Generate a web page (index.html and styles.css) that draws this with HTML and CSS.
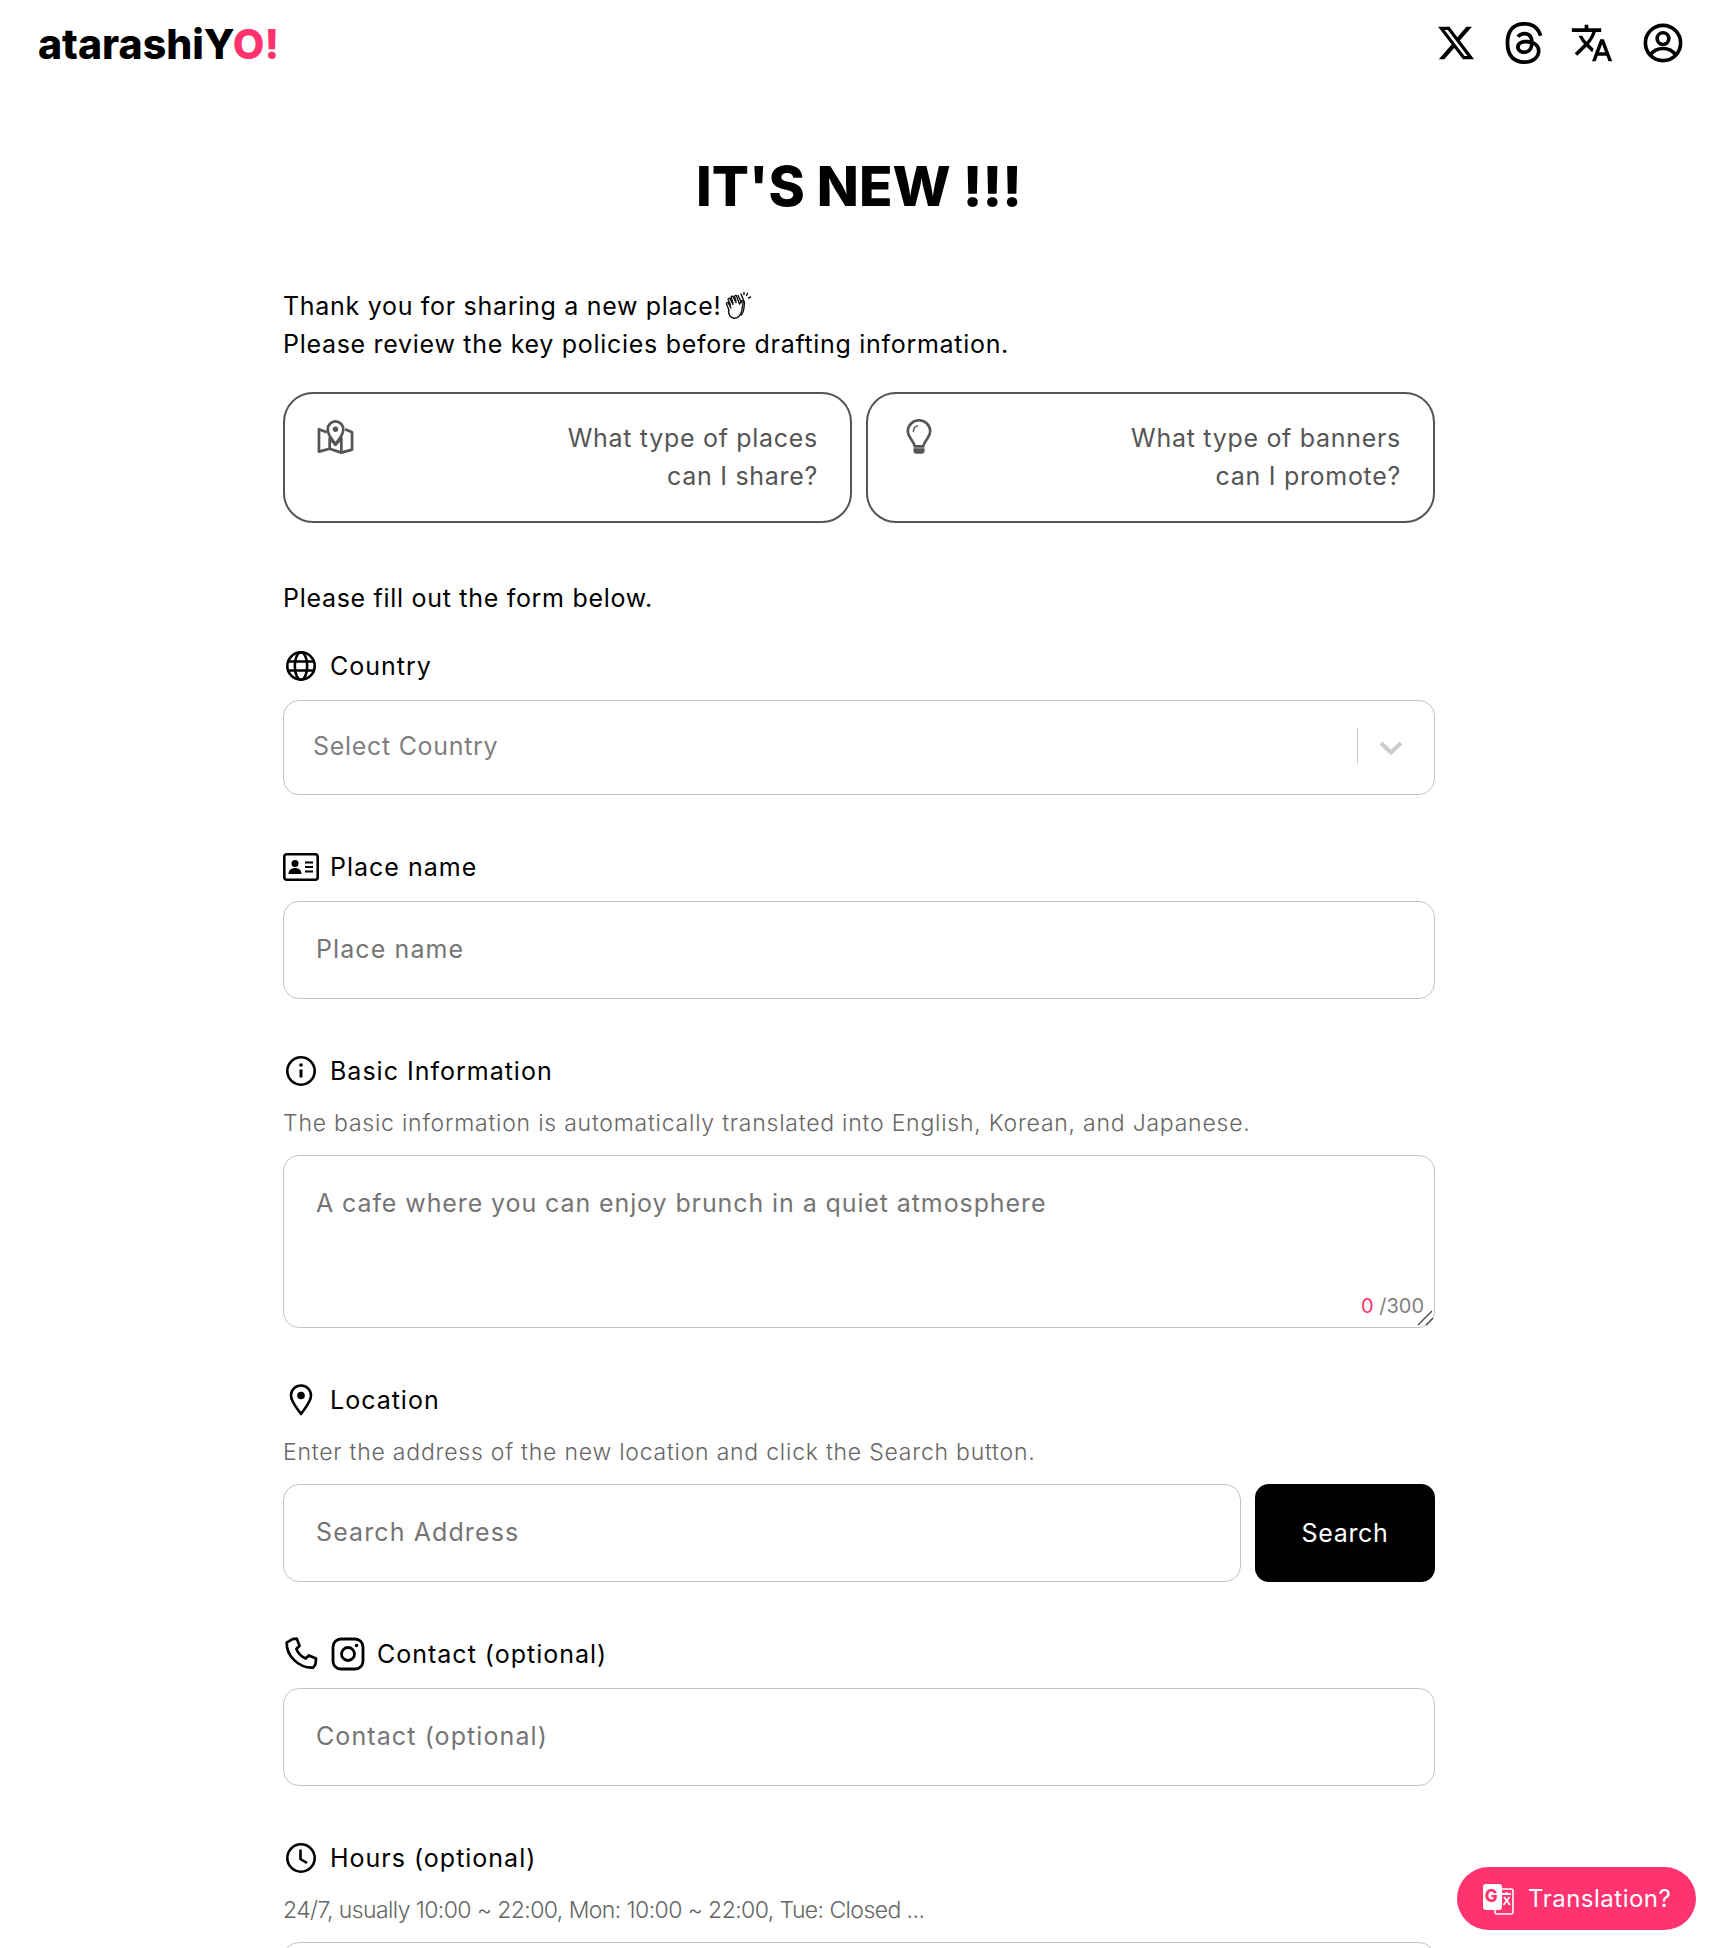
FILE: index.html
```html
<!DOCTYPE html>
<html lang="en">
<head>
    <meta charset="UTF-8">
    <meta name="viewport" content="width=device-width, initial-scale=1.0">
    <title>atarashiYO!</title>
    <link rel="stylesheet" href="styles.css">
</head>
<body>
    <header class="topbar">
        <div class="logo">atarashiY<span class="logo-pink">O!</span></div>
        <nav class="topbar-icons">
            <a class="topbar-icon"><svg width="40" height="40" viewBox="0 0 24 24" fill="#000"><path d="M18.244 2.25h3.308l-7.227 8.26 8.502 11.24H16.17l-5.214-6.817L4.99 21.75H1.68l7.73-8.835L1.254 2.25H8.08l4.713 6.231zm-1.161 17.52h1.833L7.084 4.126H5.117z"/></svg></a>
            <a class="topbar-icon"><svg width="42" height="42" viewBox="0 0 16 16" fill="#000"><path d="M6.321 6.016c-.27-.18-1.166-.802-1.166-.802.756-1.081 1.753-1.502 3.132-1.502.975 0 1.803.327 2.394.948s.928 1.509 1.005 2.644q.492.207.905.484c1.109.745 1.719 1.86 1.719 3.137 0 2.716-2.226 5.075-6.256 5.075C4.594 16 1 13.987 1 7.994 1 2.034 4.482 0 8.044 0 9.69 0 13.55.243 15 5.036l-1.36.353C12.516 1.974 10.163 1.43 8.006 1.43c-3.565 0-5.582 2.171-5.582 6.79 0 4.143 2.254 6.343 5.63 6.343 2.777 0 4.847-1.443 4.847-3.556 0-1.438-1.208-2.127-1.27-2.127-.236 1.234-.868 3.31-3.644 3.31-1.618 0-3.013-1.118-3.013-2.582 0-2.09 1.984-2.847 3.55-2.847.586 0 1.294.04 1.663.114 0-.637-.54-1.728-1.9-1.728-1.25 0-1.566.405-1.967.868ZM8.716 8.19c-2.04 0-2.304.87-2.304 1.416 0 .878 1.043 1.168 1.6 1.168 1.02 0 2.067-.282 2.232-2.423a6.2 6.2 0 0 0-1.528-.161"/></svg></a>
            <a class="topbar-icon"><svg width="44" height="44" viewBox="0 0 24 24" fill="#000"><path d="M12.87 15.07l-2.54-2.51.03-.03c1.74-1.94 2.98-4.17 3.71-6.53H17V4h-7V2H8v2H1v1.99h11.17C11.5 7.92 10.44 9.75 9 11.35 8.07 10.32 7.3 9.19 6.69 8h-2c.73 1.63 1.73 3.17 2.98 4.56l-5.09 5.02L4 19l5-5 3.11 3.11.76-2.04zM18.5 10h-2L12 22h2l1.12-3h4.75L21 22h2l-4.5-12zm-2.62 7l1.62-4.33L19.12 17h-3.24z"/></svg></a>
            <a class="topbar-icon user-icon"><svg width="44" height="44" viewBox="0 0 24 24" fill="none" stroke="#000" stroke-width="2"><circle cx="12" cy="12" r="9.6"/><circle cx="12" cy="9.6" r="3.2"/><path d="M5 18.6c1.6-2.3 4.2-3.6 7-3.6s5.400 1.300 7 3.600"/></svg></a>
        </nav>
    </header>

    <main class="content">
        <h1 class="title">IT'S NEW !!!</h1>

        <p class="intro">Thank you for sharing a new place!<svg class="clap" width="28" height="30" viewBox="0 0 28 30" fill="none" stroke="#111" stroke-width="1.400" stroke-linecap="round" stroke-linejoin="round"><path d="M5 19 2.500 13c-.5-1.300 1.300-2.100 2-.8L7 17M6.500 14 4.200 8.800c-.5-1.300 1.300-2.100 2-.8L9 13.500M9 12 7.200 6.600c-.4-1.300 1.500-2 2-.7L12 11.500M12 10 10.600 6c-.4-1.300 1.500-2 2-.7L15.500 13l1.800-2.800c.8-1.100 2.400-.2 1.900 1l-1 6c-.3 5.500-3.700 10.500-8.200 10-3.800-.4-5.500-4-5.500-8.200"/><path d="M14 4.500l3.500 7M17 3l3.500 8.500M20.500 12l-.7 6c-.4 2.500-1.200 4.500-2.300 6"/><path d="M20 1.500v2M23.500 2.500l-1 2M26.500 6l-2 1"/></svg><br>Please review the key policies before drafting information.</p>

        <div class="policy-cards">
            <div class="policy-card">
                <svg class="card-icon" width="37" height="38" viewBox="0 0 38 38" fill="none" stroke="#555" stroke-width="2.800" stroke-linejoin="round"><path d="M10 13 2 10v23l11-3 12 4 11-3V13l-7-3"/><path d="M13 30V19l6 7 6-7v15"/><path d="M19 25c-4-5-8-9-8-15a8 8 0 0 1 16 0c0 6-4 10-8 15z" fill="#fff"/><circle cx="19" cy="10" r="2.800" fill="#555" stroke="none"/></svg>
                <div class="card-text">What type of places<br>can I share?</div>
            </div>
            <div class="policy-card">
                <svg class="card-icon bulb" width="28" height="38" viewBox="0 0 30 40" fill="none" stroke="#555" stroke-width="2.800" stroke-linecap="round"><path d="M10.500 29c-.5-3-2.500-5.500-4.500-8.500C4 17.500 3 15 3 13a12 12 0 0 1 24 0c0 2-1 4.500-3 7.500-2 3-4 5.500-4.500 8.500z"/><path d="M9 13c0-3 2-5.500 4.500-6" stroke-width="1.600"/><path d="M9 31h12v3c0 1.800-1.500 3-3 3h-6c-1.500 0-3-1.200-3-3z" fill="#555" stroke="none"/></svg>
                <div class="card-text">What type of banners<br>can I promote?</div>
            </div>
        </div>

        <p class="form-note">Please fill out the form below.</p>

        <div class="field">
            <label class="field-label"><span class="label-icon"><svg width="32" height="32" viewBox="0 0 32 32" fill="none" stroke="#000" stroke-width="2.600"><circle cx="16" cy="16" r="13.700"/><ellipse cx="16" cy="16" rx="6.200" ry="13.700"/><path d="M2.600 11.500h26.800M2.600 20.500h26.800"/></svg></span>Country</label>
            <div class="select-box">
                <span class="select-text">Select Country</span>
                <span class="select-divider"></span>
                <svg class="select-arrow" width="24" height="14" viewBox="0 0 24 14" fill="none" stroke="#ccc" stroke-width="4"><path d="M2 2l10 9.500L22 2"/></svg>
            </div>
        </div>

        <div class="field">
            <label class="field-label"><span class="label-icon"><svg width="36" height="28" viewBox="0 0 36 28" fill="none" stroke="#000" stroke-width="2.600"><rect x="1.300" y="1.300" width="33.400" height="25.400" rx="2.500"/><circle cx="12" cy="10.500" r="3.500" fill="#000" stroke="none"/><path d="M5.500 21c0-4 3-6 6.500-6s6.500 2 6.500 6z" fill="#000" stroke="none"/><path d="M22 9.500h8M22 14h8M22 18.500h8" stroke-width="2"/></svg></span>Place name</label>
            <input class="text-input" type="text" placeholder="Place name">
        </div>

        <div class="field">
            <label class="field-label"><span class="label-icon"><svg width="32" height="32" viewBox="0 0 32 32" fill="none" stroke="#000" stroke-width="2.600"><circle cx="16" cy="16" r="13.700"/><path d="M16 14.500v8" stroke-width="3"/><circle cx="16" cy="10" r="1.800" fill="#000" stroke="none"/></svg></span>Basic Information</label>
            <p class="hint">The basic information is automatically translated into English, Korean, and Japanese.</p>
            <div class="textarea-wrap">
                <textarea class="text-area" placeholder="A cafe where you can enjoy brunch in a quiet atmosphere"></textarea>
                <span class="counter"><span class="counter-now">0</span> /300</span>
                <svg class="resize-grip" width="18" height="18" viewBox="0 0 18 18" fill="none" stroke="#444" stroke-width="1.300"><path d="M1 16 15 2M9 16l7-7"/></svg>
            </div>
        </div>

        <div class="field">
            <label class="field-label"><span class="label-icon"><svg width="24" height="32" viewBox="0 0 24 32" fill="none" stroke="#000" stroke-width="2.600" stroke-linejoin="round"><path d="M12 30C7 23 2 17.500 2 11.500a10 10 0 0 1 20 0C22 17.500 17 23 12 30z"/><circle cx="12" cy="11.500" r="3.800" fill="#000" stroke="none"/></svg></span>Location</label>
            <p class="hint">Enter the address of the new location and click the Search button.</p>
            <div class="search-row">
                <input class="text-input" type="text" placeholder="Search Address">
                <button class="search-btn" type="button">Search</button>
            </div>
        </div>

        <div class="field">
            <label class="field-label"><span class="label-icon"><svg width="34" height="34" viewBox="0 0 24 24" fill="none" stroke="#000" stroke-width="1.900" stroke-linejoin="round"><path d="M6 1.500 9 1.200l2 5-2.300 2.300c1.300 3 3.500 5.300 6.600 6.700L17.600 13l5 2.200-.4 4.200-1.700 2.200C10 22 1.700 13 1.900 4z"/></svg></span><span class="label-icon"><svg width="34" height="34" viewBox="0 0 34 34" fill="none" stroke="#000" stroke-width="2.800"><rect x="2" y="2" width="30" height="30" rx="8"/><circle cx="17" cy="17" r="6.500"/><circle cx="25.500" cy="8.500" r="1.800" fill="#000" stroke="none"/></svg></span>Contact (optional)</label>
            <input class="text-input" type="text" placeholder="Contact (optional)">
        </div>

        <div class="field">
            <label class="field-label"><span class="label-icon"><svg width="32" height="32" viewBox="0 0 32 32" fill="none" stroke="#000" stroke-width="2.600"><circle cx="16" cy="16" r="13.700"/><path d="M15.500 7.500v9.500l6.500 4"/></svg></span>Hours (optional)</label>
            <p class="hint hint-tight">24/7, usually 10:00 ~ 22:00, Mon: 10:00 ~ 22:00, Tue: Closed ...</p>
            <input class="text-input" type="text">
        </div>
    </main>

    <button class="translate-btn" type="button">
        <svg width="32" height="32" viewBox="0 0 32 32"><rect x="13" y="6" width="18" height="25" rx="2" fill="none" stroke="#fff" stroke-width="1.600"/><rect x="1" y="1" width="19" height="26" rx="3" fill="#fff"/><text x="2.800" y="19" class="g-letter">G</text><path d="M20 11h9M24.500 9v2M21.500 22l6-8M22 14l6 8" stroke="#fff" stroke-width="1.800" fill="none"/></svg>
        Translation?
    </button>
</body>
</html>
```

FILE: styles.css
```css
html, body {
    height: 100%;
    overflow: hidden;
}

body {
    margin: 0;
    background-color: #fff;
    color: #000;
    font-family: 'Inter', 'Noto Sans', sans-serif;
    font-size: 25px;
    letter-spacing: 0.7px;
}

.topbar {
    display: flex;
    justify-content: space-between;
    align-items: center;
    height: 86px;
    padding: 2px 31px 0 38px;
    box-sizing: border-box;
}

.logo {
    font-size: 41px;
    font-weight: 800;
    letter-spacing: 0;
}

.logo-pink {
    color: #ff3370;
}

.topbar-icons {
    display: flex;
    gap: 24px;
    margin-top: -2px;
}

.topbar-icon {
    display: flex;
    justify-content: center;
    align-items: center;
    width: 44px;
    height: 44px;
}

.user-icon {
    margin-left: 3px;
}

.content {
    width: 1152px;
    margin: 0 281px 0 283px;
}

.title {
    margin: 65px 0 66px;
    font-size: 55px;
    line-height: 70px;
    font-weight: 800;
    letter-spacing: 0;
    text-align: center;
}

.intro {
    margin: 0 0 29px;
    line-height: 38px;
}

.clap {
    vertical-align: -6px;
    margin-left: 2px;
}

.policy-cards {
    display: flex;
    gap: 14px;
    margin-bottom: 56px;
}

.policy-card {
    flex: 1;
    display: flex;
    justify-content: space-between;
    align-items: flex-start;
    height: 131px;
    box-sizing: border-box;
    padding: 25px 32px;
    border: 2px solid #555;
    border-radius: 30px;
}

.card-text {
    color: #555;
    line-height: 38px;
    text-align: right;
}

.bulb {
    margin-left: 5px;
}

.form-note {
    margin: 0 0 31px;
    line-height: 38px;
}

.field {
    margin-bottom: 54px;
}

.field-label {
    display: flex;
    align-items: center;
    gap: 11px;
    height: 36px;
    margin-bottom: 16px;
    line-height: 36px;
    letter-spacing: 1px;
}

.label-icon {
    display: flex;
    justify-content: center;
    align-items: center;
    width: 36px;
    height: 36px;
}

.hint {
    margin: 0 0 14px;
    color: #666;
    font-size: 23px;
    font-weight: 300;
    line-height: 36px;
    letter-spacing: 0.77px;
}

.hint-tight {
    letter-spacing: -0.58px;
}

.select-box {
    display: flex;
    align-items: center;
    height: 95px;
    box-sizing: border-box;
    padding: 0 31px 3px 29px;
    border: 1px solid #c4c4c4;
    border-radius: 16px;
}

.select-text {
    flex: 1;
    color: #808080;
}

.select-divider {
    width: 1px;
    height: 36px;
    margin-right: 21px;
    background-color: #ccc;
}

.select-arrow {
    margin-top: 3px;
}

.text-input {
    display: block;
    width: 100%;
    height: 98px;
    box-sizing: border-box;
    padding: 0 32px 2px;
    border: 1px solid #c4c4c4;
    border-radius: 16px;
    outline: none;
    font-family: inherit;
    font-size: 25px;
    letter-spacing: 1.1px;
}

.text-input::placeholder,
.text-area::placeholder {
    color: #757575;
}

.textarea-wrap {
    position: relative;
}

.text-area {
    display: block;
    width: 100%;
    height: 173px;
    box-sizing: border-box;
    padding: 29px 32px;
    border: 1px solid #c4c4c4;
    border-radius: 16px;
    outline: none;
    resize: none;
    font-family: inherit;
    font-size: 25px;
    letter-spacing: 0.9px;
    line-height: 36px;
}

.counter {
    position: absolute;
    right: 11px;
    bottom: 8px;
    color: #808080;
    font-size: 20px;
    letter-spacing: 0;
    line-height: 28px;
}

.counter-now {
    color: #ff3370;
}

.resize-grip {
    position: absolute;
    right: 0;
    bottom: 1px;
}

.search-row {
    display: flex;
    gap: 14px;
}

.search-btn {
    flex: none;
    width: 180px;
    border: none;
    border-radius: 14px;
    background-color: #000;
    color: #fff;
    font-family: inherit;
    font-size: 25px;
    letter-spacing: 0.7px;
}

.translate-btn {
    position: fixed;
    right: 20px;
    bottom: 18px;
    display: flex;
    align-items: center;
    gap: 14px;
    width: 239px;
    height: 63px;
    box-sizing: border-box;
    padding: 0 0 0 25px;
    border: none;
    border-radius: 32px;
    background-color: #ff3370;
    color: #fff;
    font-family: inherit;
    font-size: 24px;
    letter-spacing: 0.5px;
}

.g-letter {
    fill: #ff3370;
    font-size: 17px;
    font-weight: 800;
    letter-spacing: 0;
}
```
